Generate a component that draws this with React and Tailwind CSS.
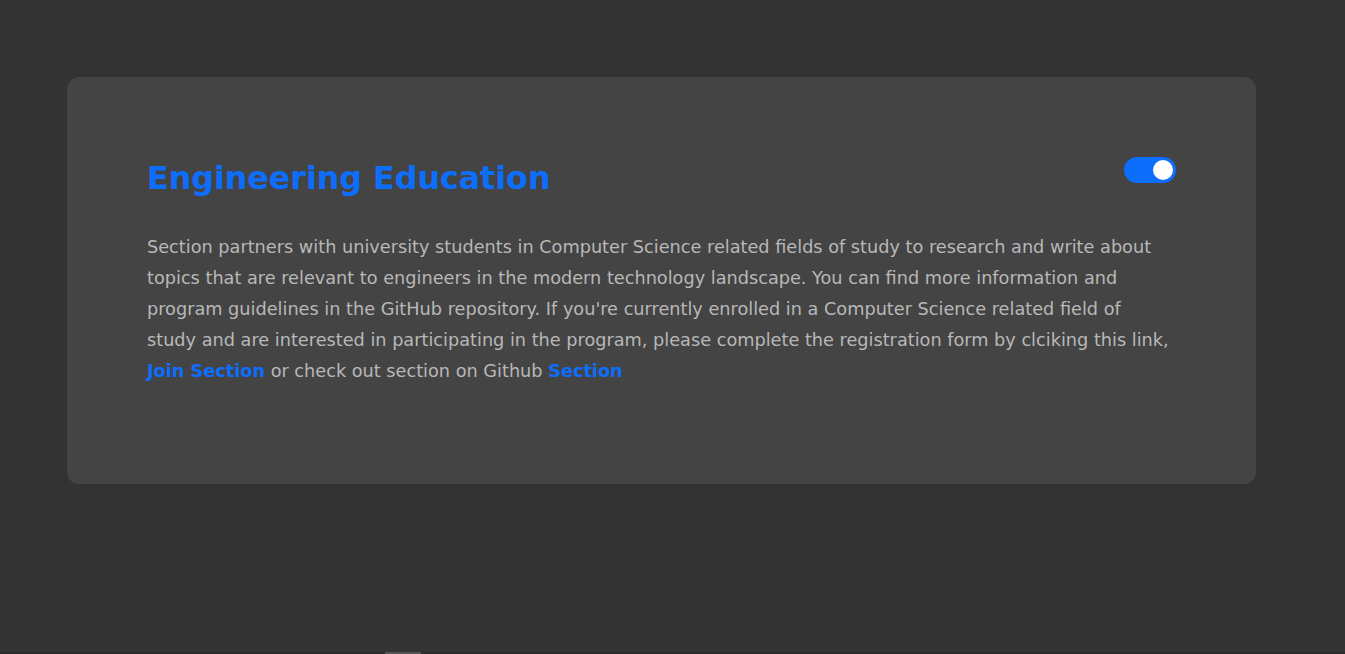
import React, { useState } from "react";

export default function App() {
  const [enabled, setEnabled] = useState(true);

  return (
    <div className="h-[654px] bg-[#333333] flex flex-col font-['DejaVu_Sans',Verdana,sans-serif] overflow-hidden">
      <div className="flex-1 pt-[77px]">
        <div className="ml-[67px] w-[1189px] rounded-xl bg-[#444444] px-[80px] pt-[80px] pb-[97px]">
          <div className="flex items-start justify-between">
            <h1 className="-mt-[2px] text-[31.7px] font-bold text-[#0d6efd]">Engineering Education</h1>
            <button
              onClick={() => setEnabled(!enabled)}
              className={
                "flex h-[26px] w-[52px] items-center rounded-full px-[3px] " +
                (enabled ? "justify-end bg-[#0d6efd]" : "justify-start bg-[#777777]")
              }
            >
              <span className="h-[20px] w-[20px] rounded-full bg-white" />
            </button>
          </div>
          <p className="mt-[29px] pr-[4px] text-[17.7px] leading-[31px] text-[#b8b8b8]">
            Section partners with university students in Computer Science related fields of study to research and
            write about topics that are relevant to engineers in the modern technology landscape. You can find more
            information and program guidelines in the GitHub repository. If you're currently enrolled in a Computer
            Science related field of study and are interested in participating in the program, please complete the
            registration form by clciking this link,{" "}
            <a href="#" className="font-bold text-[#0d6efd]">Join Section</a> or check out section on Github{" "}
            <a href="#" className="font-bold text-[#0d6efd]">Section</a>
          </p>
        </div>
      </div>
      {/* scrollbar strip */}
      <div className="h-[2px] bg-[#2a2a2a] pl-[385px]">
        <div className="h-full w-[36px] bg-[#555555]" />
      </div>
    </div>
  );
}
